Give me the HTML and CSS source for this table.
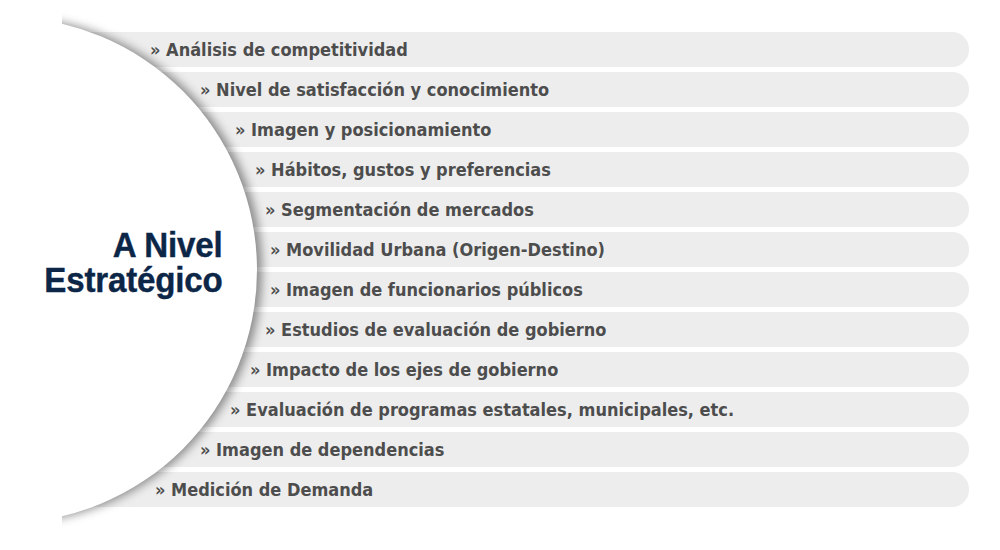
FILE: index.html
```html
<!DOCTYPE html>
<html lang="es">
<head>
<meta charset="utf-8">
<title>A Nivel Estratégico</title>
<link rel="stylesheet" href="styles.css">
</head>
<body>
<div class="stage">
  <ul class="list">
    <li class="row r1">» Análisis de competitividad</li>
    <li class="row r2">» Nivel de satisfacción y conocimiento</li>
    <li class="row r3">» Imagen y posicionamiento</li>
    <li class="row r4">» Hábitos, gustos y preferencias</li>
    <li class="row r5">» Segmentación de mercados</li>
    <li class="row r6">» Movilidad Urbana (Origen-Destino)</li>
    <li class="row r7">» Imagen de funcionarios públicos</li>
    <li class="row r8">» Estudios de evaluación de gobierno</li>
    <li class="row r9">» Impacto de los ejes de gobierno</li>
    <li class="row r10">» Evaluación de programas estatales, municipales, etc.</li>
    <li class="row r11">» Imagen de dependencias</li>
    <li class="row r12">» Medición de Demanda</li>
  </ul>
  <div class="arc">
    <div class="disc"></div>
  </div>
  <h1 class="title"><span class="line">A Nivel</span><span class="line">Estratégico</span></h1>
</div>
</body>
</html>
```
FILE: styles.css
```css
html, body {
  margin: 0;
  padding: 0;
  background: #ffffff;
}
.stage {
  position: relative;
  width: 1000px;
  height: 550px;
  overflow: hidden;
}
.list {
  list-style: none;
  margin: 0;
  padding: 32px 0 0 62px;
  width: 907px;
  display: flex;
  flex-direction: column;
  gap: 5px;
}
.row {
  height: 35px;
  display: flex;
  align-items: center;
  background: #ededed;
  border-radius: 0 17px 17px 0;
  font-family: "DejaVu Sans Condensed", "DejaVu Sans", sans-serif;
  font-weight: bold;
  font-size: 18px;
  color: #4d4d4d;
  white-space: nowrap;
}
.r1 { padding-left: 88px; }
.r2 { padding-left: 138px; }
.r3 { padding-left: 173px; }
.r4 { padding-left: 193px; }
.r5 { padding-left: 203px; }
.r6 { padding-left: 208px; }
.r7 { padding-left: 208px; }
.r8 { padding-left: 203px; }
.r9 { padding-left: 188px; }
.r10 { padding-left: 168px; }
.r11 { padding-left: 138px; }
.r12 { padding-left: 93px; }
.arc {
  position: absolute;
  left: 62px;
  top: 0;
  width: 320px;
  height: 550px;
  overflow: hidden;
}
.disc {
  position: absolute;
  left: -311px;
  top: 17px;
  width: 506px;
  height: 506px;
  border-radius: 50%;
  background: #ffffff;
  box-shadow: 5px 0 10px rgba(0, 0, 0, 0.42);
}
.title {
  position: absolute;
  right: 778px;
  top: 227px;
  margin: 0;
  display: flex;
  flex-direction: column;
  align-items: flex-end;
  font-family: "Liberation Sans", Arial, sans-serif;
  font-weight: bold;
  font-size: 35px;
  line-height: 35px;
  color: #0c2647;
  letter-spacing: -0.2px;
  -webkit-text-stroke: 0.4px #0c2647;
  transform: scaleX(0.945);
  transform-origin: right center;
}
.line {
  display: block;
  height: 35px;
}
```
